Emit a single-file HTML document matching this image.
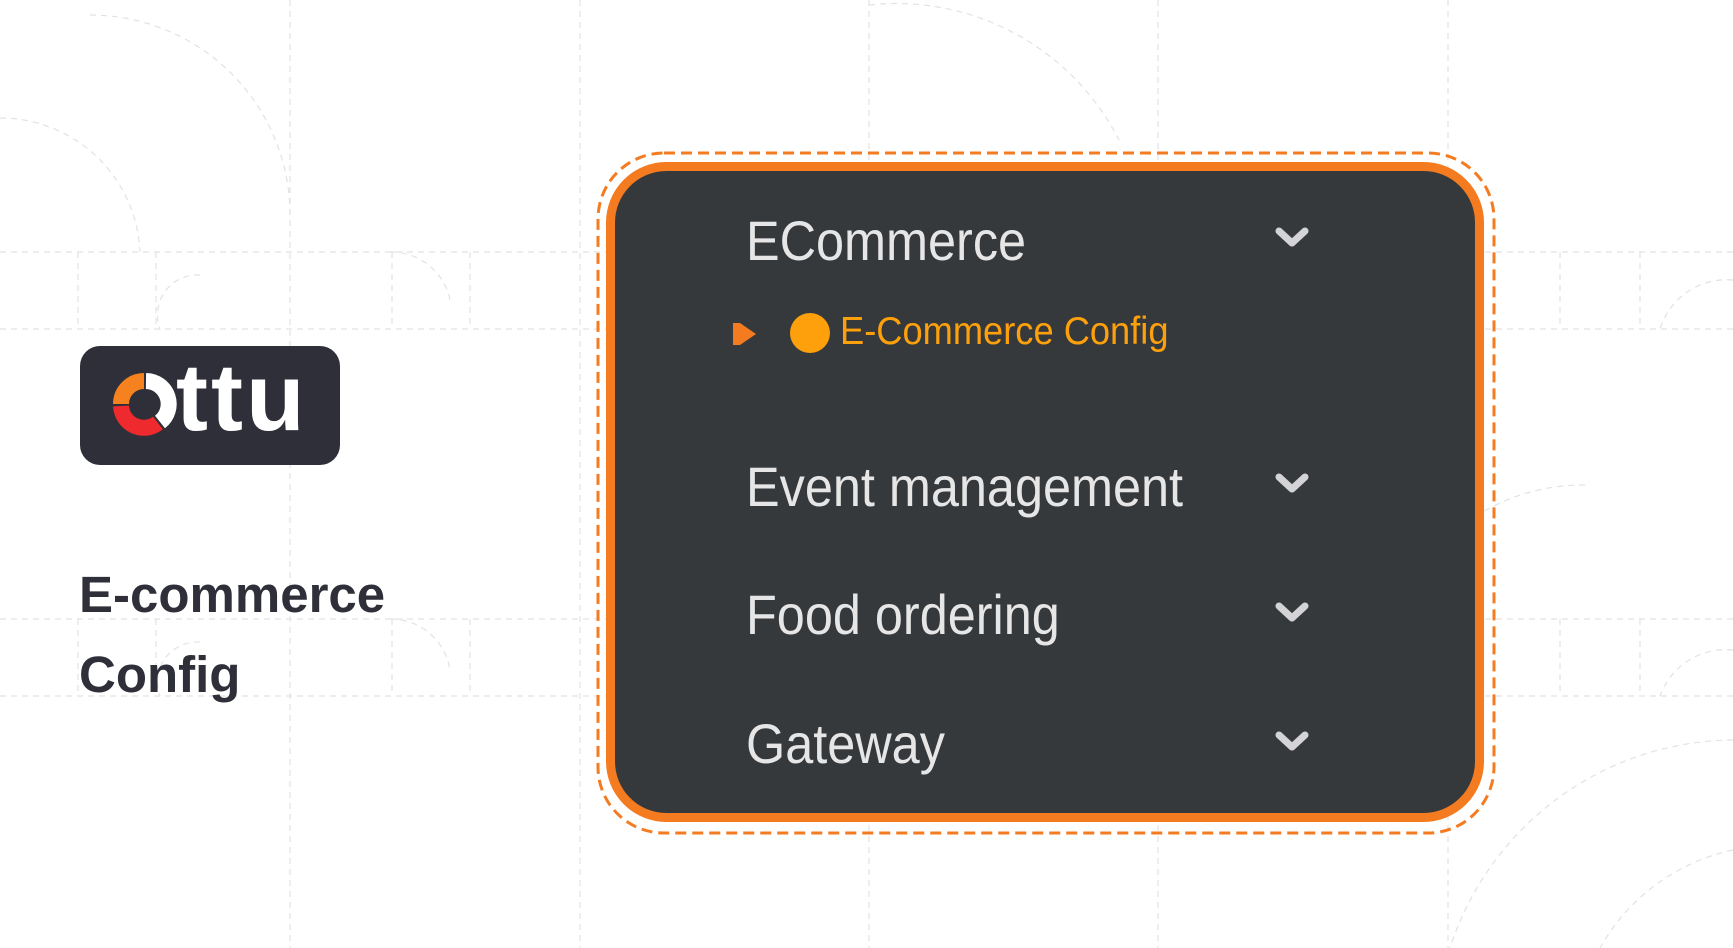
<!DOCTYPE html>
<html><head><meta charset="utf-8"><style>
html,body{margin:0;padding:0}
body{width:1733px;height:948px;position:relative;overflow:hidden;background:#fff;font-family:"Liberation Sans",sans-serif}
.abs{position:absolute}
.item{position:absolute;left:746px;color:#e6e6e6;font-size:56px;white-space:nowrap;transform-origin:0 100%;transform:scaleX(0.9);line-height:1}
.chev{position:absolute;left:1274px;width:36px;height:24px}
</style></head><body>
<svg class="abs" style="left:0;top:0" width="1733" height="948">
<g stroke="#e2e2e2" stroke-width="1.2" stroke-dasharray="6 5" fill="none">
<line x1="290" y1="0" x2="290" y2="948"/><line x1="580" y1="0" x2="580" y2="948"/><line x1="869" y1="0" x2="869" y2="948"/><line x1="1158" y1="0" x2="1158" y2="948"/><line x1="1448" y1="0" x2="1448" y2="948"/>
<line x1="0" y1="252" x2="1733" y2="252"/><line x1="0" y1="329" x2="1733" y2="329"/><line x1="0" y1="619" x2="1733" y2="619"/><line x1="0" y1="696" x2="1733" y2="696"/>
<line x1="78" y1="252" x2="78" y2="329"/><line x1="156" y1="252" x2="156" y2="329"/><line x1="392" y1="252" x2="392" y2="329"/><line x1="470" y1="252" x2="470" y2="329"/>
<line x1="78" y1="619" x2="78" y2="696"/><line x1="156" y1="619" x2="156" y2="696"/><line x1="392" y1="619" x2="392" y2="696"/><line x1="470" y1="619" x2="470" y2="696"/>
<line x1="1560" y1="619" x2="1560" y2="696"/><line x1="1640" y1="619" x2="1640" y2="696"/><line x1="1560" y1="252" x2="1560" y2="329"/><line x1="1640" y1="252" x2="1640" y2="329"/>
<path d="M90 15 A200 200 0 0 1 290 215"/><path d="M0 118 A140 140 0 0 1 140 252"/><path d="M869 5 A250 250 0 0 1 1119 140"/>
<path d="M1585 485 A200 200 0 0 0 1388 640"/><path d="M1733 740 A300 300 0 0 0 1450 948"/><path d="M1733 850 A200 200 0 0 0 1600 948"/>
<path d="M390 252 A60 60 0 0 1 450 300"/><path d="M390 619 A60 60 0 0 1 450 670"/><path d="M200 275 A40 40 0 0 0 160 329"/><path d="M200 642 A40 40 0 0 0 160 696"/>
<path d="M1733 280 A70 70 0 0 0 1660 329"/><path d="M1733 650 A70 70 0 0 0 1660 696"/>
</g>
<rect x="598" y="153" width="896" height="680" rx="66" fill="none" stroke="#f47b20" stroke-width="3" stroke-dasharray="11 6"/>
<rect x="610.5" y="166.5" width="869" height="651" rx="56" fill="#36393c" stroke="#f47b20" stroke-width="9"/>
<rect x="80" y="346" width="260" height="119" rx="20" fill="#2e2f38"/>
<path d="M144 381 A23 23 0 0 0 121 404" stroke="#f5821f" stroke-width="16" fill="none"/>
<path d="M121 406 A23 23 0 0 0 158 423" stroke="#ee2a2e" stroke-width="16" fill="none"/>
<path d="M146 381 A23 23 0 0 1 160 422" stroke="#fff" stroke-width="16" fill="none"/>
<polygon points="733,323 733,345 740,345 756,334 740,323" fill="#f47b20"/>
<circle cx="810" cy="333" r="20" fill="#fda00c"/>
</svg>
<div class="abs" style="left:176px;top:350px;font-size:96px;font-weight:bold;color:#fff;line-height:1;letter-spacing:3px">ttu</div>
<div class="abs" style="left:79px;top:569px;font-size:51px;font-weight:bold;color:#2e2f38;line-height:1">E-commerce</div>
<div class="abs" style="left:79px;top:649px;font-size:51px;font-weight:bold;color:#2e2f38;line-height:1">Config</div>
<div class="item" style="top:213px">ECommerce</div>
<div class="item" style="left:840px;top:312px;font-size:39px;color:#fda00c;transform:scaleX(0.93)">E-Commerce Config</div>
<div class="item" style="top:459px">Event management</div>
<div class="item" style="top:587px">Food ordering</div>
<div class="item" style="top:716px">Gateway</div>
<svg class="chev" style="top:225px" viewBox="0 0 36 24"><path d="M5 6 L18 18 L31 6" stroke="#d4d4d6" stroke-width="7" fill="none" stroke-linecap="round" stroke-linejoin="round"/></svg>
<svg class="chev" style="top:471px" viewBox="0 0 36 24"><path d="M5 6 L18 18 L31 6" stroke="#d4d4d6" stroke-width="7" fill="none" stroke-linecap="round" stroke-linejoin="round"/></svg>
<svg class="chev" style="top:600px" viewBox="0 0 36 24"><path d="M5 6 L18 18 L31 6" stroke="#d4d4d6" stroke-width="7" fill="none" stroke-linecap="round" stroke-linejoin="round"/></svg>
<svg class="chev" style="top:729px" viewBox="0 0 36 24"><path d="M5 6 L18 18 L31 6" stroke="#d4d4d6" stroke-width="7" fill="none" stroke-linecap="round" stroke-linejoin="round"/></svg>
</body></html>
